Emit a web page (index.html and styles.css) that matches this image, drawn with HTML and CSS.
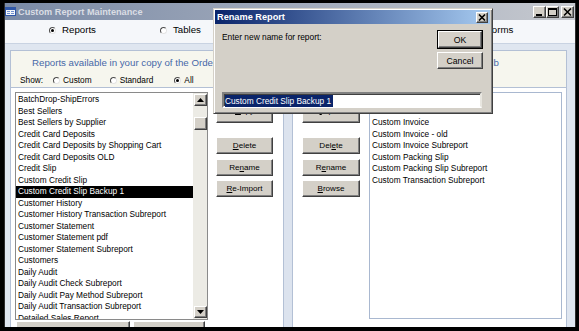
FILE: index.html
```html
<!DOCTYPE html>
<html>
<head>
<meta charset="utf-8">
<title>Custom Report Maintenance</title>
<link rel="stylesheet" href="styles.css">
</head>
<body>
<div class="window">
  <div class="titlebar">
    <svg class="app-icon" width="11" height="9" viewBox="0 0 11 9"><rect x="0.5" y="0.5" width="10" height="8" fill="#f4f6fb" stroke="#2f57a8"/><rect x="1" y="1" width="9" height="2" fill="#2f57a8"/><path d="M2 4.5h3M2 6.5h3M6 4.5h3M6 6.5h3" stroke="#6f8fcf"/></svg>
    <span class="title">Custom Report Maintenance</span>
    <div class="caption-btns">
      <span class="cbtn"><svg width="11" height="10" viewBox="0 0 11 10"><rect x="2" y="7" width="6" height="2" fill="#000"/></svg></span>
      <span class="cbtn"><svg width="11" height="10" viewBox="0 0 11 10"><rect x="1.5" y="1.5" width="8" height="7" fill="none" stroke="#000"/><rect x="1" y="1" width="9" height="2" fill="#000"/></svg></span>
      <span class="cbtn cbtn-close"><svg width="11" height="10" viewBox="0 0 11 10"><path d="M2 1.5l7 7M9 1.5l-7 7" stroke="#000" stroke-width="1.6"/></svg></span>
    </div>
  </div>
  <div class="client">
    <div class="tabs">
      <label class="tab tab-reports"><span class="radio on"></span><span class="tab-text">Reports</span></label>
      <label class="tab tab-tables"><span class="radio"></span><span class="tab-text">Tables</span></label>
      <label class="tab tab-forms"><span class="radio"></span><span class="tab-text">Forms</span></label>
    </div>
    <div class="frame">
      <div class="header">
        <div class="caption">Reports available in your copy of the Order Manager database and in your Custom file - CustomReports.mdb</div>
        <div class="show">
          <span class="show-label">Show:</span>
          <label class="opt opt-custom"><span class="radio"></span><span class="opt-text">Custom</span></label>
          <label class="opt opt-standard"><span class="radio"></span><span class="opt-text">Standard</span></label>
          <label class="opt opt-all"><span class="radio on"></span><span class="opt-text">All</span></label>
        </div>
      </div>
      <div class="lower">
        <div class="pane pane-left">
          <div class="pane-top">
            <div class="listbox listbox-left">
              <div class="items">
                <div class="item">BatchDrop-ShipErrors</div>
                <div class="item">Best Sellers</div>
                <div class="item">Best Sellers by Supplier</div>
                <div class="item">Credit Card Deposits</div>
                <div class="item">Credit Card Deposits by Shopping Cart</div>
                <div class="item">Credit Card Deposits OLD</div>
                <div class="item">Credit Slip</div>
                <div class="item">Custom Credit Slip</div>
                <div class="item selected">Custom Credit Slip Backup 1</div>
                <div class="item">Customer History</div>
                <div class="item">Customer History Transaction Subreport</div>
                <div class="item">Customer Statement</div>
                <div class="item">Customer Statement pdf</div>
                <div class="item">Customer Statement Subreport</div>
                <div class="item">Customers</div>
                <div class="item">Daily Audit</div>
                <div class="item">Daily Audit Check Subreport</div>
                <div class="item">Daily Audit Pay Method Subreport</div>
                <div class="item">Daily Audit Transaction Subreport</div>
                <div class="item">Detailed Sales Report</div>
              </div>
              <div class="scrollbar">
                <span class="sbtn"><svg width="7" height="4" viewBox="0 0 7 4"><path d="M3.5 0L7 4H0z" fill="#000"/></svg></span>
                <span class="track track-top"></span>
                <span class="thumb"></span>
                <span class="track track-rest"></span>
                <span class="sbtn"><svg width="7" height="4" viewBox="0 0 7 4"><path d="M0 0h7L3.5 4z" fill="#000"/></svg></span>
              </div>
            </div>
            <div class="btn-col">
              <span class="btn btn-first"><span class="u">C</span>opy</span>
              <span class="btn"><span class="u">D</span>elete</span>
              <span class="btn">Re<span class="u">n</span>ame</span>
              <span class="btn"><span class="u">R</span>e-Import</span>
            </div>
          </div>
          <div class="bottom-btns">
            <span class="btn btn-wide">Add to Custom Reports Menu</span>
            <span class="btn btn-hide">Hide From Menu</span>
          </div>
        </div>
        <div class="divider"></div>
        <div class="pane pane-right">
          <div class="btn-col btn-col-right">
            <span class="btn btn-first"><span class="u">I</span>mport</span>
            <span class="btn">Del<span class="u">e</span>te</span>
            <span class="btn">R<span class="u">e</span>name</span>
            <span class="btn"><span class="u">B</span>rowse</span>
          </div>
          <div class="listbox listbox-right">
            <div class="items">
              <div class="item">Custom Credit Memo</div>
              <div class="item">Custom Credit Note</div>
              <div class="item">Custom Invoice</div>
              <div class="item">Custom Invoice - old</div>
              <div class="item">Custom Invoice Subreport</div>
              <div class="item">Custom Packing Slip</div>
              <div class="item">Custom Packing Slip Subreport</div>
              <div class="item">Custom Transaction Subreport</div>
            </div>
          </div>
        </div>
      </div>
    </div>
  </div>
</div>

<div class="dialog">
  <div class="dlg-title">
    <span class="dlg-title-text">Rename Report</span>
    <span class="dlg-close"><svg width="8" height="7" viewBox="0 0 8 7"><path d="M1 0.5l6 6M7 0.5l-6 6" stroke="#000" stroke-width="1.6"/></svg></span>
  </div>
  <div class="dlg-body">
    <div class="dlg-row">
      <div class="dlg-prompt">Enter new name for report:</div>
      <div class="dlg-btns">
        <span class="btn dlg-ok">OK</span>
        <span class="btn dlg-cancel">Cancel</span>
      </div>
    </div>
    <div class="dlg-input"><span class="sel">Custom Credit Slip Backup 1</span></div>
  </div>
</div>
</body>
</html>
```

FILE: styles.css
```css
* { box-sizing: border-box; }
html, body { margin: 0; }
body {
  position: relative;
  width: 579px;
  height: 331px;
  overflow: hidden;
  background: #000;
  padding: 3px 3px 0 4px;
  font-family: "Liberation Sans", Arial, sans-serif;
  color: #000;
}

/* main window */
.window {
  width: 572px;
  height: 324px;
  display: flex;
  flex-direction: column;
  border-left: 1px solid #2e2e2e;
  border-right: 1px solid #2e2e2e;
  background: #dfe6f0;
  overflow: hidden;
}
.titlebar {
  height: 17px;
  flex: none;
  display: flex;
  align-items: center;
  padding: 0 1px 0 0;
  background: linear-gradient(to right, #7a8aa6, #c6c9cf);
}
.app-icon { flex: none; display: block; }
.title {
  margin-left: 2px;
  font-weight: bold;
  font-size: 9.2px;
  color: #dadde4;
  white-space: nowrap;
}
.caption-btns { margin-left: auto; display: flex; align-items: center; }
.cbtn {
  width: 13px;
  height: 12px;
  background: #d4d0c8;
  border: 1px solid;
  border-color: #fff #404040 #404040 #fff;
  box-shadow: inset -1px -1px #808080;
  display: flex;
  align-items: center;
  justify-content: center;
}
.cbtn-close { margin-left: 2px; }

.client { flex: 1; display: flex; flex-direction: column; min-height: 0; }

/* tabs */
.tabs {
  height: 24px;
  flex: none;
  background: #f5f7fa;
  border-bottom: 1px solid #c9d3e2;
  display: flex;
  align-items: flex-start;
  padding-top: 4px;
  font-size: 9.7px;
  line-height: 12px;
}
.tab { display: flex; align-items: center; }
.tab-text { margin-left: 6px; }
.tab-reports { margin-left: 44px; }
.tab-tables { margin-left: 64px; }
.tab-forms { margin-left: 272px; }

.radio {
  width: 7px;
  height: 7px;
  flex: none;
  border-radius: 50%;
  border: 1px solid;
  border-color: #4a4a4a #e4e4e4 #e4e4e4 #4a4a4a;
  background: #fff;
  position: relative;
}
.radio.on::after {
  content: "";
  position: absolute;
  left: 1px;
  top: 1px;
  width: 3px;
  height: 3px;
  border-radius: 50%;
  background: #000;
}

/* frame */
.frame {
  flex: 1;
  min-height: 0;
  margin: 6px 8px 0 5px;
  border: 1px solid #b3c0d5;
  border-bottom: none;
  display: flex;
  flex-direction: column;
}
.header {
  height: 37px;
  flex: none;
  background: #f6f6ee;
  border-bottom: 1px solid #b3c0d5;
  padding: 6px 0 0 9px;
  overflow: hidden;
}
.caption {
  margin-left: 12px;
  font-size: 9.7px;
  line-height: 12px;
  color: #4668a8;
  white-space: nowrap;
}
.show {
  margin-top: 5px;
  display: flex;
  align-items: center;
  font-size: 8.3px;
  line-height: 12px;
}
.opt { display: flex; align-items: center; }
.opt-text { margin-left: 3px; }
.opt-custom { margin-left: 10px; }
.opt-standard { margin-left: 18px; }
.opt-all { margin-left: 21px; }

.lower { flex: 1; min-height: 0; display: flex; }
.pane { background: #fff; }
.pane-left {
  width: 272px;
  flex: none;
  padding: 4px 0 0 4px;
  display: flex;
  flex-direction: column;
}
.pane-top { display: flex; align-items: flex-start; }
.divider {
  width: 10px;
  flex: none;
  background: #dce3ee;
  border-left: 1px solid #b3c0d5;
  border-right: 1px solid #b3c0d5;
}
.pane-right {
  flex: 1;
  padding: 4px 0 0 9px;
  display: flex;
  align-items: flex-start;
}

/* list boxes */
.listbox {
  width: 193px;
  flex: none;
  display: flex;
  background: #fff;
  overflow: hidden;
}
.listbox-left { height: 228px; border: 1px solid #8a8a8a; }
.listbox-right { height: 227px; margin-left: 9px; border: 1px solid #a9b8d0; }
.items {
  flex: 1;
  min-width: 0;
  overflow: hidden;
  padding-top: 1px;
  font-size: 8.3px;
  line-height: 11.5px;
}
.item { height: 11.5px; padding-left: 2px; white-space: nowrap; }
.item.selected { background: #000; color: #fff; }

.scrollbar {
  width: 14px;
  flex: none;
  display: flex;
  flex-direction: column;
  padding: 1px 0 1px 1px;
  background: #ecebe5;
}
.sbtn {
  height: 12px;
  flex: none;
  background: #d4d0c8;
  border: 1px solid;
  border-color: #fff #404040 #404040 #fff;
  box-shadow: inset -1px -1px #808080;
  display: flex;
  align-items: center;
  justify-content: center;
}
.sbtn svg { display: block; }
.track-top { height: 11px; flex: none; }
.thumb {
  height: 13px;
  flex: none;
  background: #d4d0c8;
  border: 1px solid;
  border-color: #fff #404040 #404040 #fff;
  box-shadow: inset -1px -1px #808080;
}
.track-rest { flex: 1; }

/* buttons */
.btn {
  height: 17px;
  flex: none;
  background: #d4d0c8;
  border: 1px solid;
  border-color: #fff #404040 #404040 #fff;
  box-shadow: inset -1px -1px #808080;
  display: flex;
  align-items: center;
  justify-content: center;
  font-size: 8.1px;
  white-space: nowrap;
}
.u { text-decoration: underline; }
.btn-col {
  width: 57px;
  flex: none;
  margin: 10px 0 0 8px;
  display: flex;
  flex-direction: column;
  gap: 4.5px;
}
.btn-col-right { width: 58px; margin-left: 0; }
.btn-first { height: 21px; margin-bottom: 9.5px; padding-bottom: 5px; }
.bottom-btns { display: flex; margin-top: 1px; padding-left: 1px; gap: 3px; }
.btn-wide { width: 114px; }
.btn-hide { width: 72px; }

/* dialog */
.dialog {
  position: absolute;
  left: 213px;
  top: 8px;
  width: 280px;
  height: 106px;
  background: #d4d0c8;
  border: 1px solid;
  border-color: #d4d0c8 #404040 #404040 #d4d0c8;
  box-shadow: inset 1px 1px #fff, inset -1px -1px #808080;
  padding: 1px 2px 2px 1px;
  display: flex;
  flex-direction: column;
}
.dlg-title {
  height: 14px;
  flex: none;
  background: linear-gradient(to right, #0a246a, #a6caf0);
  display: flex;
  align-items: center;
  padding: 0 2px 0 2px;
}
.dlg-title-text {
  font-weight: bold;
  font-size: 9.2px;
  color: #fff;
  white-space: nowrap;
}
.dlg-close {
  margin-left: auto;
  width: 12px;
  height: 11px;
  background: #d4d0c8;
  border: 1px solid;
  border-color: #fff #404040 #404040 #fff;
  box-shadow: inset -1px -1px #808080;
  display: flex;
  align-items: center;
  justify-content: center;
}
.dlg-close svg { display: block; }
.dlg-body {
  flex: 1;
  display: flex;
  flex-direction: column;
  padding: 6px 7px 3px 7px;
}
.dlg-row { display: flex; align-items: flex-start; }
.dlg-prompt {
  flex: 1;
  margin-top: 1px;
  font-size: 8.4px;
  line-height: 12px;
}
.dlg-btns { width: 46px; display: flex; flex-direction: column; gap: 3px; }
.dlg-ok {
  height: 19px;
  font-size: 8.7px;
  outline: 1px solid #000;
  outline-offset: -1px;
  border-width: 2px;
}
.dlg-cancel { height: 17px; font-size: 8.7px; }
.dlg-input {
  margin-top: auto;
  margin-right: 1px;
  height: 16px;
  background: #fff;
  border: 2px solid;
  border-color: #808080 #e8e6e0 #fff #808080;
  box-shadow: inset 1px 1px #404040;
  padding: 1px 0 0 1px;
  display: flex;
  align-items: flex-start;
}
.sel {
  background: #0a246a;
  color: #fff;
  font-size: 8.3px;
  line-height: 12px;
  padding-right: 2px;
  white-space: nowrap;
}
```
